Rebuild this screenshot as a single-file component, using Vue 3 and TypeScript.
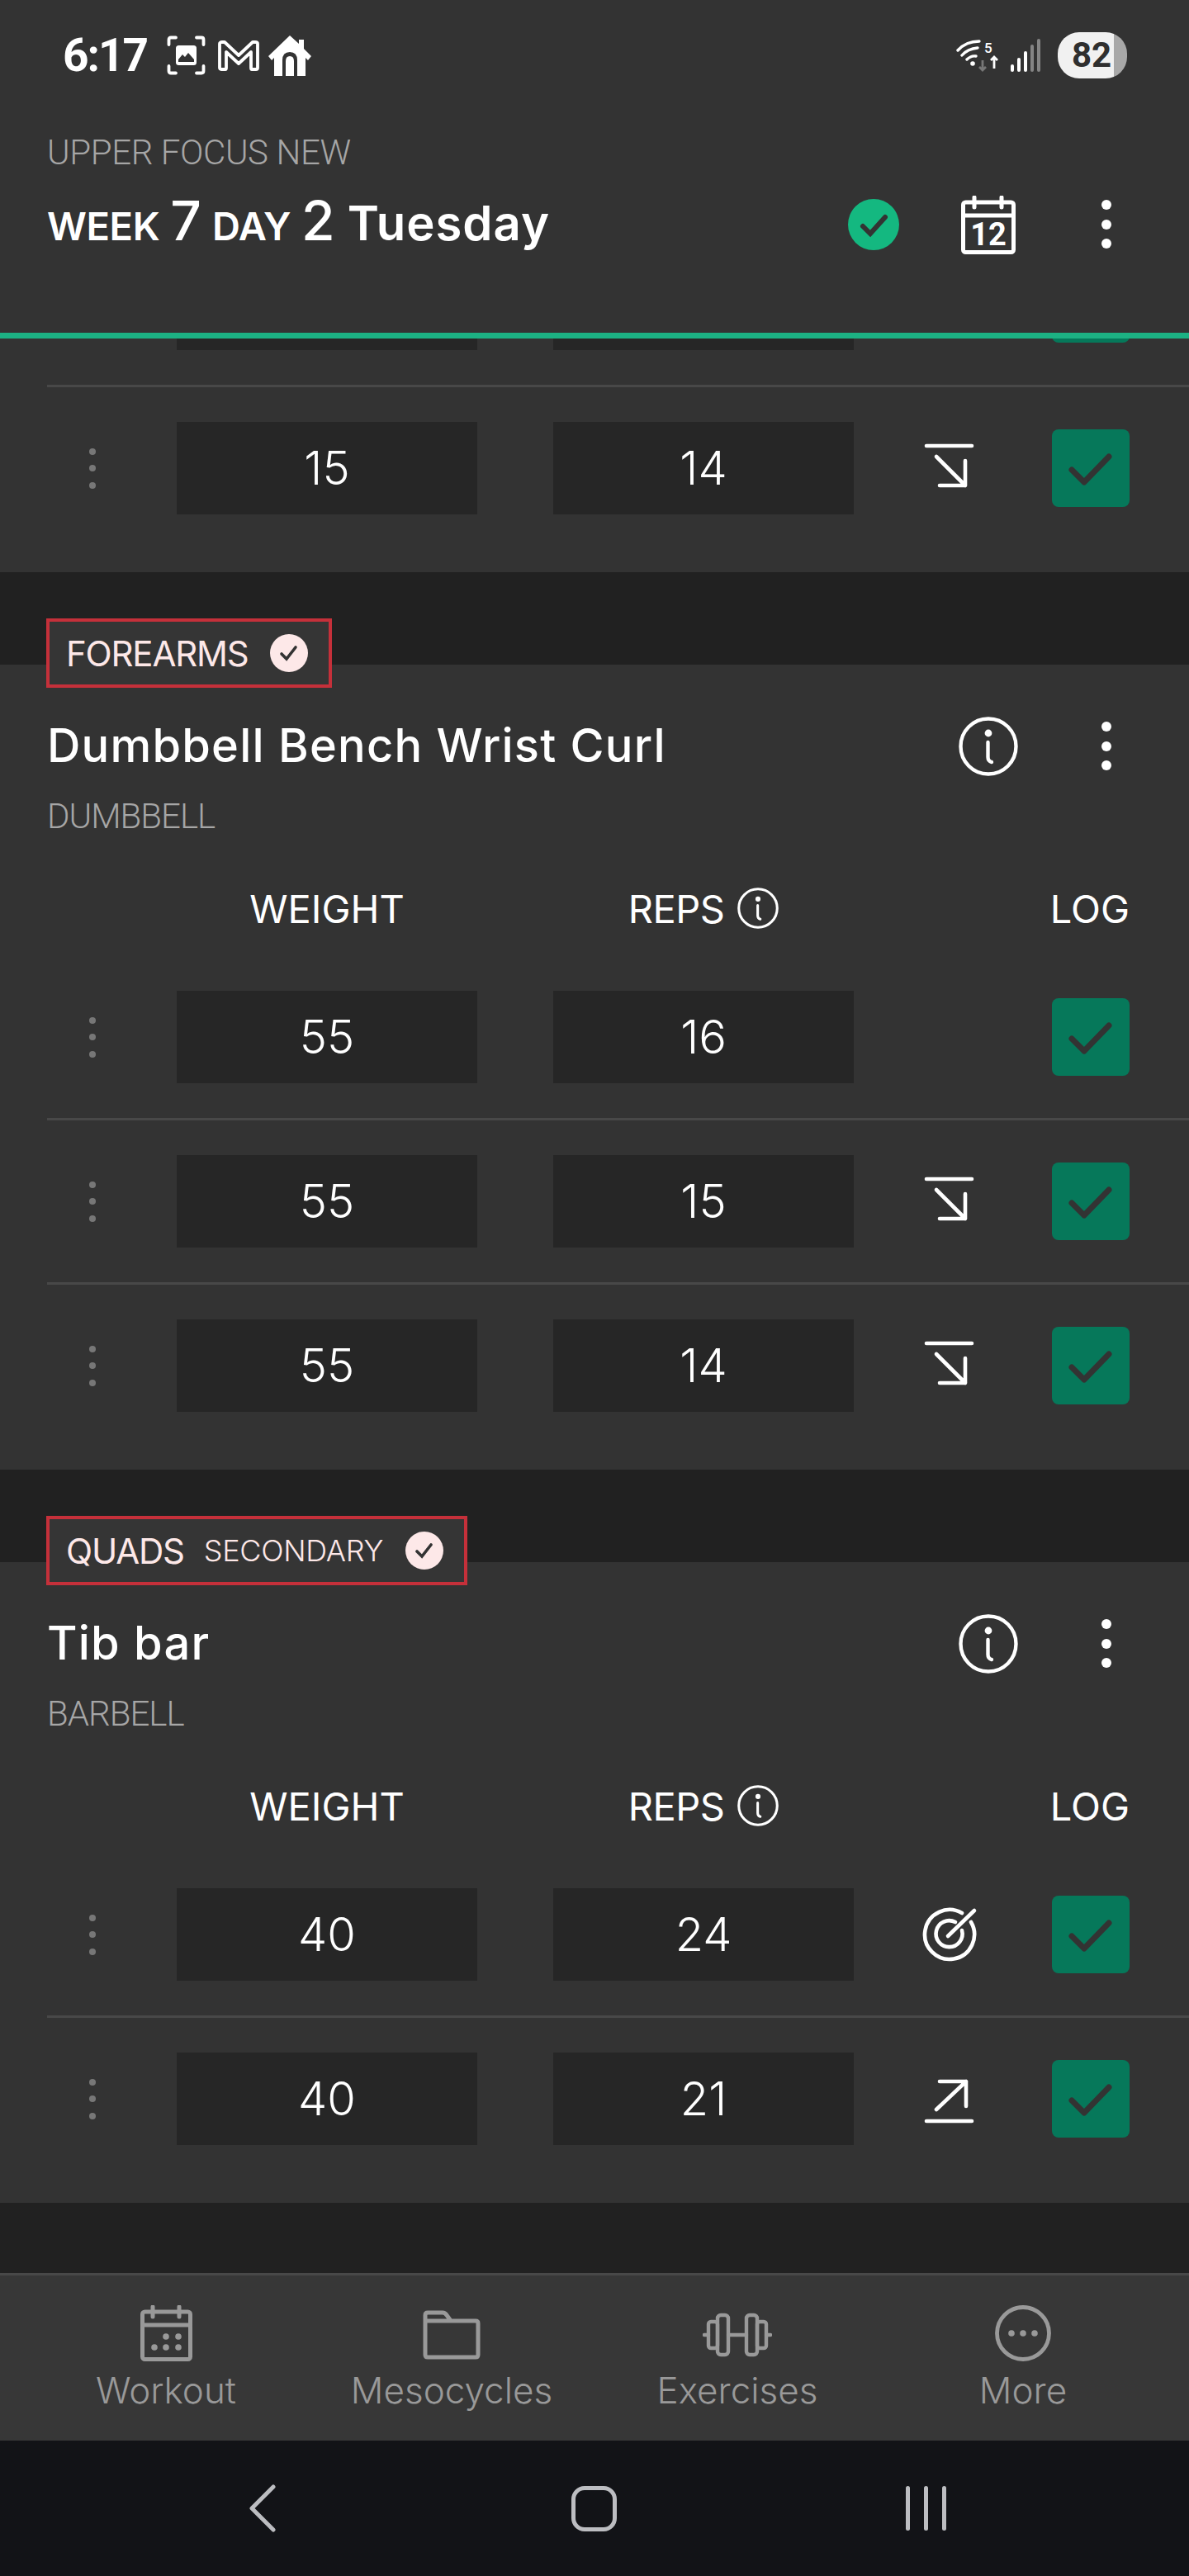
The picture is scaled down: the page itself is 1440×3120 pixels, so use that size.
<script setup lang="ts">
type Mark = '' | 'down' | 'up' | 'target'
interface SetRow { weight: string; reps: string; mark: Mark }
interface Group { tag: string; sub?: string; name: string; kit: string; rows: SetRow[] }

const groups: Group[] = [
  {
    tag: 'FOREARMS',
    name: 'Dumbbell Bench Wrist Curl',
    kit: 'DUMBBELL',
    rows: [
      { weight: '55', reps: '16', mark: '' },
      { weight: '55', reps: '15', mark: 'down' },
      { weight: '55', reps: '14', mark: 'down' },
    ],
  },
  {
    tag: 'QUADS',
    sub: 'SECONDARY',
    name: 'Tib bar',
    kit: 'BARBELL',
    rows: [
      { weight: '40', reps: '24', mark: 'target' },
      { weight: '40', reps: '21', mark: 'up' },
    ],
  },
]
const partial: SetRow[] = [
  { weight: '', reps: '', mark: '' },
  { weight: '15', reps: '14', mark: 'down' },
]
const nav = [
  { id: 'n-cal', label: 'Workout' },
  { id: 'n-folder', label: 'Mesocycles' },
  { id: 'n-bell', label: 'Exercises' },
  { id: 'n-more', label: 'More' },
]
</script>

<template>
  <div class="page">
    <svg class="defs" aria-hidden="true">
      <symbol id="s-check" viewBox="0 0 94 94">
        <path d="M24 49 L39 64 L69 33" fill="none" stroke="currentColor" stroke-width="7" stroke-linecap="round" stroke-linejoin="round" />
      </symbol>
      <symbol id="s-info" viewBox="0 0 72 72">
        <circle cx="36" cy="36" r="33.5" fill="none" stroke="currentColor" stroke-width="4.4" />
        <circle cx="36" cy="20" r="4.4" fill="currentColor" />
        <path d="M35.5 31 V49 Q35.5 54 40 55" fill="none" stroke="currentColor" stroke-width="4.4" stroke-linecap="round" />
      </symbol>
      <symbol id="s-dots" viewBox="0 0 24 72">
        <circle cx="12" cy="12" r="6" fill="currentColor" />
        <circle cx="12" cy="36" r="6" fill="currentColor" />
        <circle cx="12" cy="59" r="6" fill="currentColor" />
      </symbol>
      <symbol id="s-up" viewBox="0 0 72 72">
        <path d="M24 15 H56 V45 M56 15 L20 49 M8 63 H63" fill="none" stroke="currentColor" stroke-width="4.6" stroke-linecap="round" stroke-linejoin="round" />
      </symbol>
      <symbol id="s-down" viewBox="0 0 72 72">
        <path d="M24 57 H55 V27 M55 57 L20 22 M8 9 H63" fill="none" stroke="currentColor" stroke-width="4.6" stroke-linecap="round" stroke-linejoin="round" />
      </symbol>
      <symbol id="s-target" viewBox="0 0 72 72">
        <path d="M51 10 A30 30 0 1 0 62 21" fill="none" stroke="currentColor" stroke-width="4.6" stroke-linecap="round" />
        <path d="M43 21 A16 16 0 1 0 51 31" fill="none" stroke="currentColor" stroke-width="4.6" stroke-linecap="round" />
        <path d="M34 38 L66 7" fill="none" stroke="currentColor" stroke-width="4.6" stroke-linecap="round" />
      </symbol>
      <symbol id="n-cal" viewBox="0 0 63 68">
        <rect x="2.5" y="8" width="58" height="57.500" rx="3" fill="none" stroke="currentColor" stroke-width="5" />
        <path d="M2.5 24 H60.500 M15 2 V14 M47 2 V14" fill="none" stroke="currentColor" stroke-width="5" stroke-linecap="round" />
        <circle cx="31" cy="38" r="3.800" fill="currentColor" />
        <circle cx="46" cy="38" r="3.800" fill="currentColor" />
        <circle cx="17" cy="51" r="3.800" fill="currentColor" />
        <circle cx="31" cy="51" r="3.800" fill="currentColor" />
        <circle cx="46" cy="51" r="3.800" fill="currentColor" />
      </symbol>
      <symbol id="n-folder" viewBox="0 0 70 60">
        <path d="M3 6 Q3 3 6 3 H24 Q27 3 29 6 L34 13 H64 Q67 13 67 16 V54 Q67 57 64 57 H6 Q3 57 3 54 Z M3 13 H34" fill="none" stroke="currentColor" stroke-width="5" stroke-linejoin="round" />
      </symbol>
      <symbol id="n-bell" viewBox="0 0 84 54">
        <rect x="7" y="11" width="11" height="32" rx="3" fill="none" stroke="currentColor" stroke-width="4.400" />
        <rect x="18" y="3" width="13" height="48" rx="4" fill="none" stroke="currentColor" stroke-width="4.400" />
        <rect x="53" y="3" width="13" height="48" rx="4" fill="none" stroke="currentColor" stroke-width="4.400" />
        <rect x="66" y="11" width="11" height="32" rx="3" fill="none" stroke="currentColor" stroke-width="4.400" />
        <path d="M2 27 H7 M31 27 H53 M77 27 H82" fill="none" stroke="currentColor" stroke-width="4.400" stroke-linecap="round" />
      </symbol>
      <symbol id="n-more" viewBox="0 0 68 68">
        <circle cx="34" cy="34" r="31.500" fill="none" stroke="currentColor" stroke-width="4.800" />
        <circle cx="20" cy="34" r="3.800" fill="currentColor" />
        <circle cx="34" cy="34" r="3.800" fill="currentColor" />
        <circle cx="48" cy="34" r="3.800" fill="currentColor" />
      </symbol>
    </svg>

    <header class="top">
      <div class="status">
        <span class="time">6:17</span>
        <svg class="st-shot" viewBox="0 0 47 48">
          <path d="M2.500 11 V5 Q2.500 2.500 5 2.500 H11 M36 2.500 H42 Q44.500 2.500 44.500 5 V11 M44.500 37 V43 Q44.500 45.500 42 45.500 H36 M11 45.500 H5 Q2.500 45.500 2.500 43 V37" fill="none" stroke="#fff" stroke-width="3.800" stroke-linecap="round" />
          <rect x="11" y="12" width="25" height="24" rx="3.500" fill="#fff" />
          <path d="M14 29 L19 23 L22 26 L26 21 L33 29 V32 H14 Z" fill="#333" />
        </svg>
        <svg class="st-mail" viewBox="0 0 50 37">
          <path d="M2 4 Q2 2 5 2 H8 L25 18 L42 2 H45 Q48 2 48 4 V33 Q48 35 46 35 H41 Q40 35 40 33 V14 L25 28 L10 14 V33 Q10 35 9 35 H4 Q2 35 2 33 Z" fill="none" stroke="#fff" stroke-width="3.800" stroke-linejoin="round" />
        </svg>
        <svg class="st-home" viewBox="0 0 52 49">
          <path d="M26 0 L37 10 V5 H43 V16 L52 25 L48 30 L45 27 V49 H35 V30 Q35 20 26 20 Q17 20 17 30 V49 H7 V27 L4 30 L0 25 Z" fill="#fff" />
          <path d="M21 49 V31 Q21 25 26 25 Q31 25 31 31 V49 Z" fill="#fff" />
        </svg>
        <span class="grow"></span>
        <svg class="st-wifi" viewBox="0 0 52 40">
          <path d="M2 14 Q12 3 28 3 M7 20 Q14 12 26 11 M13 25 Q18 20 24 21" fill="none" stroke="#fff" stroke-width="3.400" stroke-linecap="round" />
          <circle cx="20" cy="30" r="2.800" fill="#fff" />
          <text x="34" y="17" class="st-five">5</text>
          <path d="M32 26 V38 M28 34 L32 38 L36 34" fill="none" stroke="#777" stroke-width="2.800" />
          <path d="M46 36 V22 M42 26 L46 22 L50 26" fill="none" stroke="#fff" stroke-width="2.800" />
        </svg>
        <svg class="st-signal" viewBox="0 0 36 40">
          <rect x="0" y="31" width="4" height="9" rx="2" fill="#fff" />
          <rect x="8" y="23" width="4" height="17" rx="2" fill="#fff" />
          <rect x="16" y="15" width="4" height="25" rx="2" fill="#fff" />
          <rect x="24" y="7" width="4" height="33" rx="2" fill="#858585" />
          <rect x="32" y="0" width="4" height="40" rx="2" fill="#858585" />
        </svg>
        <span class="battery"><span class="batt-num">82</span></span>
      </div>
      <div class="plan">UPPER FOCUS NEW</div>
      <div class="week-row">
        <div class="week">
          <span class="w-small">WEEK</span><span class="w-big">7</span><span class="w-small">DAY</span><span class="w-big">2</span><span class="w-day">Tuesday</span>
        </div>
        <span class="done">
          <svg viewBox="0 0 62 62" class="done-svg"><path d="M18 33 L27 42 L45 22" fill="none" stroke="#333" stroke-width="6" stroke-linecap="round" /></svg>
        </span>
        <svg class="cal" viewBox="0 0 66 71">
          <rect x="2.500" y="8" width="61" height="60.500" rx="3" fill="none" stroke="#fff" stroke-width="5" />
          <path d="M2.500 24 H63.500 M16 2 V14 M49 2 V14" fill="none" stroke="#fff" stroke-width="5" stroke-linecap="round" />
          <text x="33" y="60" class="cal-num">12</text>
        </svg>
        <svg class="more-dots"><use href="#s-dots" /></svg>
      </div>
    </header>

    <main class="scroll">
      <div class="scroll-inner">
        <section class="card card-partial">
          <div v-for="(r, i) in partial" :key="i" class="row">
            <span class="handle"><i></i><i></i><i></i></span>
            <span class="cell">{{ r.weight }}</span>
            <span class="cell cell-b">{{ r.reps }}</span>
            <span class="mark">
              <svg v-if="r.mark" class="mark-svg"><use :href="'#s-' + r.mark" /></svg>
            </span>
            <span class="log"><svg class="log-svg"><use href="#s-check" /></svg></span>
          </div>
        </section>

        <div v-for="g in groups" :key="g.name" class="group">
          <div class="tag">
            <span class="tag-main">{{ g.tag }}</span>
            <span v-if="g.sub" class="tag-sub">{{ g.sub }}</span>
            <span class="tag-check">
              <svg viewBox="0 0 46 46" class="tag-svg"><path d="M14 24 L20 30 L31 16" fill="none" stroke="#333" stroke-width="3.600" stroke-linecap="round" /></svg>
            </span>
          </div>
          <section class="card">
            <div class="head">
              <h2 class="name">{{ g.name }}</h2>
              <svg class="head-info"><use href="#s-info" /></svg>
              <svg class="more-dots head-dots"><use href="#s-dots" /></svg>
            </div>
            <div class="kit">{{ g.kit }}</div>
            <div class="cols">
              <span class="col-w">WEIGHT</span>
              <span class="col-r">REPS<svg class="col-info"><use href="#s-info" /></svg></span>
              <span class="col-l">LOG</span>
            </div>
            <div v-for="(r, i) in g.rows" :key="i" class="row">
              <span class="handle"><i></i><i></i><i></i></span>
              <span class="cell">{{ r.weight }}</span>
              <span class="cell cell-b">{{ r.reps }}</span>
              <span class="mark">
                <svg v-if="r.mark" class="mark-svg"><use :href="'#s-' + r.mark" /></svg>
              </span>
              <span class="log"><svg class="log-svg"><use href="#s-check" /></svg></span>
            </div>
          </section>
        </div>
      </div>
    </main>

    <nav class="tabs">
      <div v-for="n in nav" :key="n.id" class="tab">
        <span class="tab-icon"><svg :class="n.id"><use :href="'#' + n.id" /></svg></span>
        <span class="tab-label">{{ n.label }}</span>
      </div>
    </nav>

    <footer class="sys">
      <svg class="sys-back" viewBox="0 0 34 58"><path d="M30 3 L4 29 L30 55" fill="none" stroke="#bcbdc1" stroke-width="5" stroke-linecap="round" stroke-linejoin="round" /></svg>
      <span class="sys-home"></span>
      <span class="sys-recent"><i></i><i></i><i></i></span>
    </footer>
  </div>
</template>

<style>
html, body { margin: 0; background: #212121; }
</style>

<style scoped>
.page {
  width: 1440px;
  height: 3120px;
  display: flex;
  flex-direction: column;
  background: #212121;
  overflow: hidden;
  font-family: Inter, "Noto Sans", sans-serif;
  color: #fff;
}
.defs { display: none; }

.top {
  height: 403px;
  flex: none;
  background: #333;
  border-bottom: 7px solid #1cb183;
  box-sizing: content-box;
  z-index: 2;
}
.status {
  height: 134px;
  display: flex;
  align-items: center;
  padding: 0 75px 0 76px;
}
.grow { flex: 1; }
.time {
  font-family: Roboto, sans-serif;
  font-weight: 700;
  font-size: 55px;
  letter-spacing: -2px;
  width: 126px;
}
.st-shot { width: 47px; height: 48px; margin-right: 15px; }
.st-mail { width: 50px; height: 37px; margin-right: 11px; }
.st-home { width: 52px; height: 49px; }
.st-wifi { width: 52px; height: 40px; margin-right: 14px; }
.st-five { font: 500 17px Roboto, sans-serif; fill: #fff; }
.st-signal { width: 36px; height: 40px; margin-right: 21px; }
.battery {
  width: 84px;
  height: 56px;
  border-radius: 26px;
  background: linear-gradient(90deg, #f1f1f1 0 68px, #a8a8a8 68px);
  display: flex;
  align-items: center;
  padding-left: 17px;
  box-sizing: border-box;
}
.batt-num {
  font: 700 42px/56px Roboto, sans-serif;
  color: #2f2f2f;
}
.plan {
  margin: 21px 0 0 57px;
  font-family: Roboto, sans-serif;
  font-size: 42px;
  line-height: 60px;
  font-weight: 300;
  color: #a6a6a6;
  letter-spacing: -0.4px;
}
.week-row {
  height: 80px;
  margin-top: 17px;
  padding: 0 88px 0 57px;
  display: flex;
  align-items: center;
}
.week {
  flex: 1;
  display: flex;
  align-items: baseline;
  gap: 13px;
  padding-bottom: 10px;
}
.w-small { font-size: 47px; font-weight: 600; letter-spacing: -0.4px; }
.w-big { font-size: 66px; font-weight: 500; }
.w-day { font-size: 58px; font-weight: 600; margin-left: 2px; letter-spacing: 1px; }
.done {
  width: 62px;
  height: 62px;
  border-radius: 50%;
  background: #14b880;
  margin-right: 75px;
}
.done-svg { width: 62px; height: 62px; display: block; }
.cal { width: 66px; height: 71px; margin-right: 98px; }
.cal-num { font: 700 38px Roboto, sans-serif; fill: #fff; text-anchor: middle; }
.more-dots { width: 24px; height: 72px; color: #fff; }

.scroll { flex: 1; min-height: 0; overflow: hidden; }
.scroll-inner { margin-top: -140px; }

.card { background: #333; padding: 59px 0 28px 57px; }
.card-partial { padding-top: 0; }
.group { padding-top: 56px; }
.tag {
  width: fit-content;
  height: 84px;
  box-sizing: border-box;
  margin: 0 0 -28px 56px;
  position: relative;
  display: flex;
  align-items: center;
  background: #353535;
  border: 4px solid #c5303a;
  padding: 0 25px 0 20px;
  color: #fde8e8;
}
.tag-main { font-size: 42px; font-weight: 400; letter-spacing: -1.2px; }
.tag-sub { font-size: 36px; font-weight: 300; margin-left: 24px; letter-spacing: -0.3px; }
.tag-check {
  width: 46px;
  height: 46px;
  margin-left: 27px;
  border-radius: 50%;
  background: #fde8e8;
}
.tag-svg { width: 46px; height: 46px; display: block; }

.head {
  height: 80px;
  display: flex;
  align-items: center;
  padding-right: 88px;
}
.name {
  flex: 1;
  margin: 0;
  padding-bottom: 2px;
  font-size: 56px;
  font-weight: 500;
  letter-spacing: 1.2px;
}
.head-info { width: 72px; height: 72px; color: #fff; margin-right: 95px; }
.kit {
  margin-top: 15px;
  font-family: Roboto, sans-serif;
  font-size: 42px;
  line-height: 60px;
  font-weight: 300;
  color: #a6a6a6;
  letter-spacing: -1px;
}
.cols {
  margin-top: 51px;
  height: 60px;
  margin-bottom: 28px;
  padding-right: 72px;
  display: grid;
  grid-template-columns: 157px 364px 92px 364px 1fr;
  align-items: center;
  font-size: 47px;
  font-weight: 400;
}
.col-w { grid-column: 2; text-align: center; }
.col-r {
  grid-column: 4;
  display: flex;
  align-items: center;
  justify-content: center;
  letter-spacing: -0.5px;
}
.col-info { width: 50px; height: 50px; margin-left: 16px; color: #fff; }
.col-l { grid-column: 5; text-align: right; }

.row {
  display: grid;
  grid-template-columns: 157px 364px 92px 364px 240px 94px;
  align-items: center;
  padding: 42px 72px 42px 0;
  border-top: 3px solid #484848;
}
.row:first-of-type { border-top: 0; }
.cols + .row { border-top: 0; }
.handle {
  display: flex;
  flex-direction: column;
  align-items: center;
  gap: 12.5px;
  width: 110px;
}
.handle i {
  width: 8px;
  height: 8px;
  border-radius: 50%;
  background: #777;
}
.cell {
  height: 112px;
  background: #262626;
  display: flex;
  align-items: center;
  justify-content: center;
  font-size: 56px;
  font-weight: 300;
}
.cell-b { grid-column: 4; }
.mark {
  display: flex;
  justify-content: center;
  padding-right: 8px;
}
.mark-svg { width: 72px; height: 72px; color: #fff; display: block; }
.log {
  width: 94px;
  height: 94px;
  border-radius: 8px;
  background: #06785a;
  color: #333;
}
.log-svg { width: 94px; height: 94px; display: block; }

.tabs {
  flex: none;
  height: 200px;
  border-top: 3px solid #484848;
  background: #373737;
  display: grid;
  grid-template-columns: repeat(4, 346px);
  padding-left: 28px;
  color: #999;
}
.tab {
  display: flex;
  flex-direction: column;
  align-items: center;
}
.tab-icon {
  height: 104px;
  display: flex;
  align-items: flex-end;
}
.n-cal { width: 63px; height: 68px; }
.n-folder { width: 70px; height: 60px; margin-bottom: 2px; }
.n-bell { width: 84px; height: 54px; margin-bottom: 5px; }
.n-more { width: 68px; height: 68px; }
.tab-label {
  font-size: 44px;
  line-height: 60px;
  font-weight: 300;
  margin-top: 5px;
}

.sys {
  flex: none;
  height: 164px;
  background: #121317;
  display: flex;
  align-items: center;
}
.sys-back { width: 34px; height: 58px; margin-left: 301px; }
.sys-home {
  width: 55px;
  height: 55px;
  box-sizing: border-box;
  border: 5px solid #bcbdc1;
  border-radius: 16px;
  margin-left: 357px;
}
.sys-recent {
  display: flex;
  gap: 17px;
  margin-left: 350px;
}
.sys-recent i {
  width: 5px;
  height: 54px;
  border-radius: 3px;
  background: #bcbdc1;
}
</style>
